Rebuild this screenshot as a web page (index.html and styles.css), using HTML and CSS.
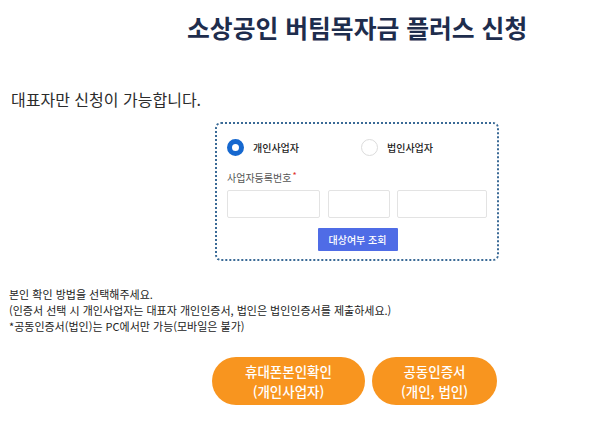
FILE: index.html
```html
<!DOCTYPE html>
<html lang="ko">
<head>
<meta charset="utf-8">
<title>소상공인 버팀목자금 플러스 신청</title>
<link rel="stylesheet" href="styles.css">
</head>
<body>
<h1 class="title">소상공인 버팀목자금 플러스 신청</h1>
<p class="lead">대표자만 신청이 가능합니다.</p>
<div class="box">
  <div class="radios">
    <label class="opt"><span class="radio radio-on"></span><span class="opt-text">개인사업자</span></label>
    <label class="opt"><span class="radio"></span><span class="opt-text">법인사업자</span></label>
  </div>
  <div class="field-label">사업자등록번호<span class="req">*</span></div>
  <div class="inputs">
    <span class="inp"></span>
    <span class="inp"></span>
    <span class="inp"></span>
  </div>
  <div class="btn-row"><span class="check-btn">대상여부 조회</span></div>
</div>
<div class="notes">
  <p>본인 확인 방법을 선택해주세요.</p>
  <p>(인증서 선택 시 개인사업자는 대표자 개인인증서, 법인은 법인인증서를 제출하세요.)</p>
  <p>*공동인증서(법인)는 PC에서만 가능(모바일은 불가)</p>
</div>
<div class="actions">
  <span class="pill pill-wide">휴대폰본인확인<br>(개인사업자)</span>
  <span class="pill pill-narrow">공동인증서<br>(개인, 법인)</span>
</div>
</body>
</html>
```
FILE: styles.css
```css
html, body {
  margin: 0;
  padding: 0;
  background: #ffffff;
}
body {
  font-family: "Noto Sans CJK KR", "Noto Sans", sans-serif;
  color: #222;
}
.title {
  margin: 0;
  padding: 9px 0 0 187px;
  font-size: 24.8px;
  line-height: 36px;
  font-weight: 700;
  color: #1e2d4d;
}
.lead {
  margin: 44px 0 0;
  padding-left: 11px;
  font-size: 16px;
  line-height: 20px;
  color: #2b2b2b;
}
.box {
  margin: 13px 0 0 215px;
  width: 284px;
  height: 139px;
  box-sizing: border-box;
  border: 2px dotted #3a6a96;
  border-radius: 6px;
  padding: 15px 10px 0 10px;
}
.radios {
  display: flex;
  height: 17px;
}
.opt {
  flex: none;
  width: 134px;
  display: flex;
  align-items: center;
  gap: 9px;
}
.radio {
  width: 17px;
  height: 17px;
  box-sizing: border-box;
  border-radius: 50%;
  border: 1px solid #dcdcdc;
  background: #fff;
  flex: none;
}
.radio-on {
  border: 5.5px solid #1668cf;
}
.opt-text {
  font-size: 10px;
  font-weight: 500;
  color: #222;
  line-height: 14px;
}
.field-label {
  margin-top: 13px;
  font-size: 10px;
  line-height: 14px;
  color: #555;
}
.req {
  color: #e0302a;
  font-size: 9px;
  vertical-align: 3px;
  margin-left: 1px;
}
.inputs {
  margin-top: 5px;
  display: grid;
  grid-template-columns: 93px 62px 90px;
  column-gap: 7.5px;
}
.inp {
  height: 28px;
  box-sizing: border-box;
  border: 1px solid #e3e3e3;
  border-radius: 2px;
  background: #fff;
}
.btn-row {
  margin-top: 10px;
  display: flex;
  justify-content: center;
  padding-left: 1px;
}
.check-btn {
  width: 80px;
  height: 23px;
  background: #4f6ce6;
  color: #fff;
  font-size: 10px;
  font-weight: 500;
  line-height: 23px;
  text-align: center;
  border-radius: 1px;
}
.notes {
  margin-top: 25px;
  padding-left: 9px;
  font-size: 11px;
  line-height: 16px;
  color: #222;
}
.notes p {
  margin: 0;
}
.actions {
  margin-top: 23px;
  padding-left: 212px;
  display: flex;
  gap: 7px;
}
.pill {
  height: 48px;
  border-radius: 24px;
  background: #f8951f;
  color: #fff;
  font-size: 13.5px;
  font-weight: 500;
  line-height: 20px;
  display: flex;
  align-items: center;
  justify-content: center;
  text-align: center;
}
.pill-wide {
  width: 153px;
}
.pill-narrow {
  width: 125px;
}
```
